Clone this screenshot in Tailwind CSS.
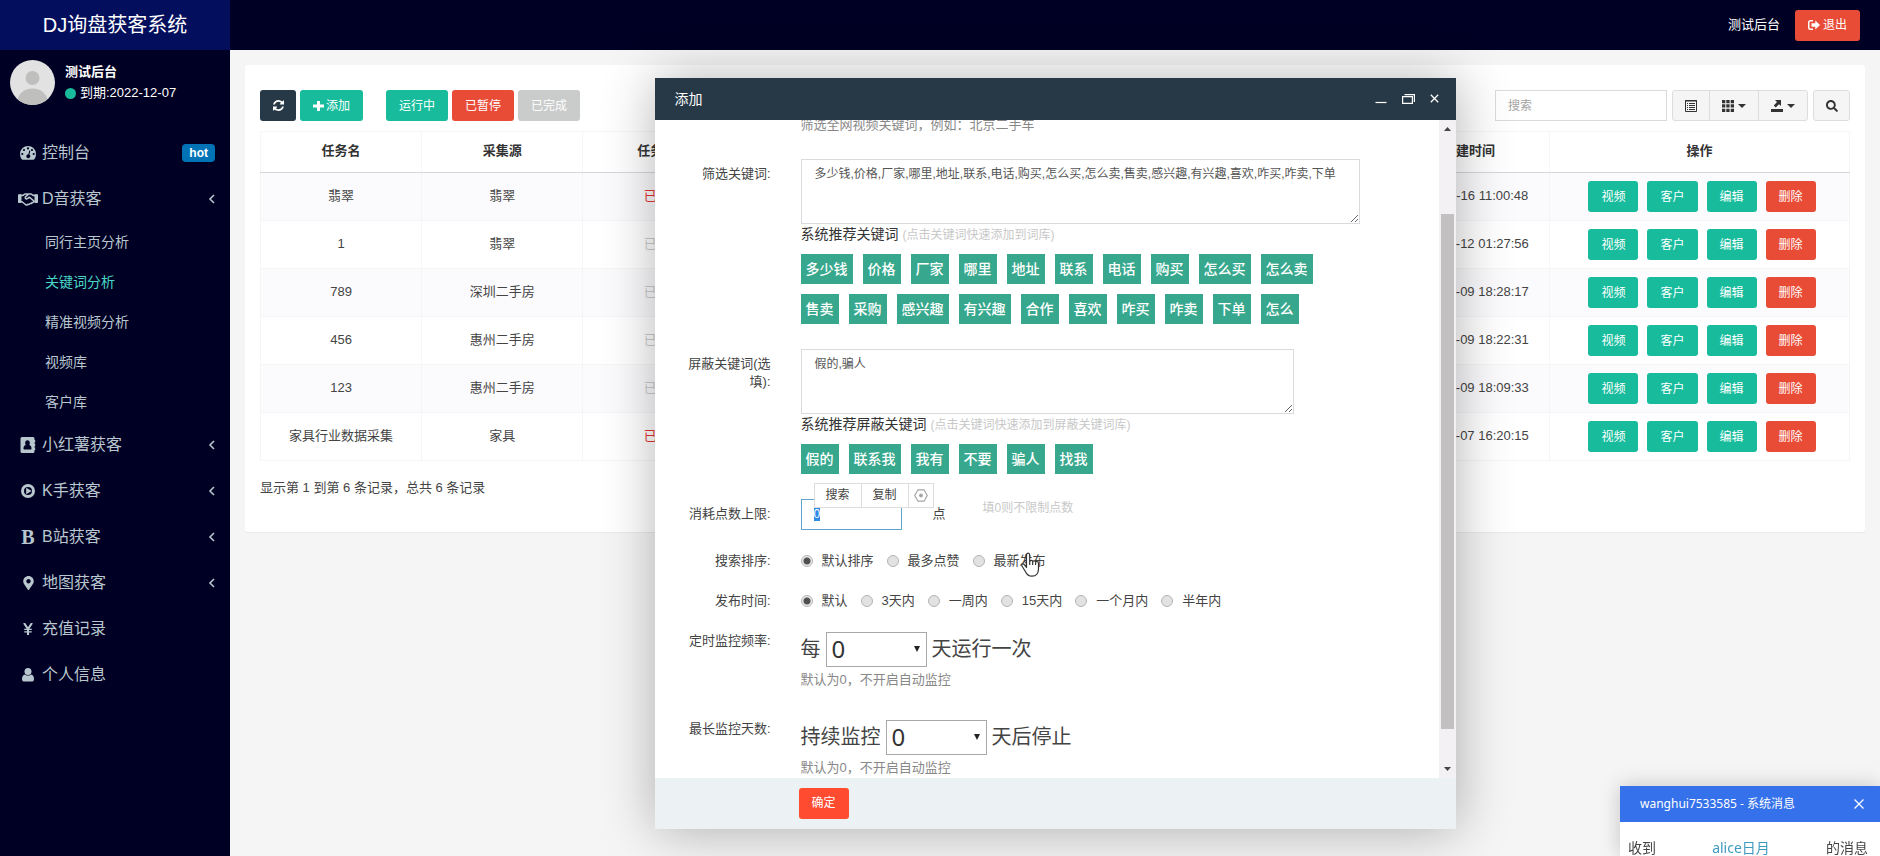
<!DOCTYPE html>
<html lang="zh-CN">
<head>
<meta charset="utf-8">
<title>DJ询盘获客系统</title>
<script src="https://cdn.jsdelivr.net/npm/@tailwindcss/browser@4"></script>
</head>
<body class="flex h-screen overflow-hidden bg-[#f5f5f6] font-['Liberation_Sans','Noto_Sans_CJK_SC',sans-serif] text-[13px] leading-[18px] text-[#444]">

<!-- Sidebar -->
<aside class="flex w-[230px] shrink-0 flex-col bg-[#000024] text-[#b8c7ce]">
  <a href="#" class="flex h-[50px] items-center justify-center bg-[#030f5c] text-[20px] leading-[30px] text-white">DJ询盘获客系统</a>
  <div class="flex h-20 gap-[10px] px-[10px] pt-[10px]">
    <svg class="size-[45px] shrink-0 rounded-full bg-[#e2e2e3]" viewBox="0 0 45 45"><circle cx="22.500" cy="18" r="7" fill="#bfc0be"/><ellipse cx="22.500" cy="41" rx="15" ry="12.500" fill="#bfc0be"/></svg>
    <div class="flex flex-col gap-[3px] pt-[3px] text-white">
      <p class="font-bold">测试后台</p>
      <p class="flex items-center gap-1"><span class="size-[11px] rounded-full bg-[#18bc9c]"></span>到期:2022-12-07</p>
    </div>
  </div>
  <nav class="text-[16px] leading-6">
    <a href="#" class="flex h-[46px] items-center pr-[15px] pl-[18px]">
      <span class="mr-1 flex w-5 justify-center"><svg class="h-4 w-4" viewBox="0 0 16 14" fill="currentColor"><path fill-rule="evenodd" d="M8 0a8 8 0 0 1 8 8c0 2-.6 3.600-1.500 5-.3.600-.7.800-1.200.8H2.700c-.5 0-.9-.2-1.200-.8A9 9 0 0 1 0 8a8 8 0 0 1 8-8zM8 1.300a1.100 1.100 0 1 0 0 2.200 1.100 1.100 0 0 0 0-2.200zM4 2.900a1.100 1.100 0 1 0 0 2.200 1.100 1.100 0 0 0 0-2.200zM2.300 6.900a1.100 1.100 0 1 0 0 2.200 1.100 1.100 0 0 0 0-2.200zM13.700 6.900a1.100 1.100 0 1 0 0 2.200 1.100 1.100 0 0 0 0-2.200zM12 2.900a1.100 1.100 0 1 0 0 2.200 1.100 1.100 0 0 0 0-2.200zM9.300 4.500 8.400 8.300a2 2 0 1 0 1 .3l1-3.800z"/></svg></span>
      控制台<span class="ml-auto rounded bg-[#0073b7] px-[7px] text-[12px] font-bold leading-[18px] text-white">hot</span>
    </a>
    <a href="#" class="flex h-[46px] items-center pr-[15px] pl-[18px]">
      <span class="mr-1 flex w-5 justify-center"><svg class="h-4 w-5" viewBox="0 0 22 15" fill="none" stroke="currentColor" stroke-width="1.700" stroke-linejoin="round" stroke-linecap="round"><path d="M.8 3H3v8H.8zM19 3h2.200v8H19z" fill="currentColor"/><path d="M3 3.500h2.500L7.500 2h3.200M19 3.500h-2.500L14.500 2h-2.800L8 5.500c-.5 1.800 1.500 2.500 3 1.200l1.500-1.200 5 4.200M3 10.500h1.500l4 3.300c1 .6 2 .2 2.300-.6 1 .6 2 .2 2.400-.8 1 .4 1.900 0 2.100-1 1 .2 1.800-.2 2.200-1.200H19"/></svg></span>
      D音获客<svg class="ml-auto h-3 w-[7px]" viewBox="0 0 7 12" fill="none" stroke="currentColor" stroke-width="1.600"><path d="M6 2 2 6l4 4"/></svg>
    </a>
    <div class="flex flex-col text-[14px] leading-10">
      <a href="#" class="pl-[45px]">同行主页分析</a>
      <a href="#" class="pl-[45px] text-[#48d8c4]">关键词分析</a>
      <a href="#" class="pl-[45px]">精准视频分析</a>
      <a href="#" class="pl-[45px]">视频库</a>
      <a href="#" class="pl-[45px]">客户库</a>
    </div>
    <a href="#" class="flex h-[46px] items-center pr-[15px] pl-[18px]">
      <span class="mr-1 flex w-5 justify-center"><svg class="h-4 w-4" viewBox="0 0 16 16" fill="currentColor"><path fill-rule="evenodd" d="M2 0h11a1.500 1.500 0 0 1 1.500 1.500V3h.7v2.500h-.7v1.200h.7v2.500h-.7v1.200h.7V13h-.7v1.500A1.500 1.500 0 0 1 13 16H2a1.500 1.500 0 0 1-1.500-1.500v-13A1.500 1.500 0 0 1 2 0zm5.500 3.300C6 3.300 5.200 4.300 5.200 6c0 .8.200 1.500.5 2-1.500.3-2.200 1.600-2.200 3.500 0 .6.300 1 1 1h6c.7 0 1-.4 1-1 0-1.900-.7-3.200-2.200-3.500.3-.5.500-1.200.5-2 0-1.700-.8-2.700-2.300-2.700z"/></svg></span>
      小红薯获客<svg class="ml-auto h-3 w-[7px]" viewBox="0 0 7 12" fill="none" stroke="currentColor" stroke-width="1.600"><path d="M6 2 2 6l4 4"/></svg>
    </a>
    <a href="#" class="flex h-[46px] items-center pr-[15px] pl-[18px]">
      <span class="mr-1 flex w-5 justify-center"><svg class="size-[14px]" viewBox="0 0 14 14" fill="currentColor"><path fill-rule="evenodd" d="M7 0a7 7 0 1 1 0 14A7 7 0 0 1 7 0zm0 3a4 4 0 1 0 0 8 4 4 0 0 0 0-8z"/><path d="M5.200 3.800v6.400L10.600 7z"/></svg></span>
      K手获客<svg class="ml-auto h-3 w-[7px]" viewBox="0 0 7 12" fill="none" stroke="currentColor" stroke-width="1.600"><path d="M6 2 2 6l4 4"/></svg>
    </a>
    <a href="#" class="flex h-[46px] items-center pr-[15px] pl-[18px]">
      <span class="mr-1 flex w-5 justify-center font-['Liberation_Serif',serif] text-[20px] font-bold">B</span>
      B站获客<svg class="ml-auto h-3 w-[7px]" viewBox="0 0 7 12" fill="none" stroke="currentColor" stroke-width="1.600"><path d="M6 2 2 6l4 4"/></svg>
    </a>
    <a href="#" class="flex h-[46px] items-center pr-[15px] pl-[18px]">
      <span class="mr-1 flex w-5 justify-center"><svg class="h-[14px] w-[11px]" viewBox="0 0 384 512" fill="currentColor"><path d="M172.268 501.670C26.970 291.031 0 269.413 0 192 0 85.961 85.961 0 192 0s192 85.961 192 192c0 77.413-26.970 99.031-172.268 309.670-9.535 13.774-29.930 13.773-39.464 0zM192 272c44.183 0 80-35.817 80-80s-35.817-80-80-80-80 35.817-80 80 35.817 80 80 80z"/></svg></span>
      地图获客<svg class="ml-auto h-3 w-[7px]" viewBox="0 0 7 12" fill="none" stroke="currentColor" stroke-width="1.600"><path d="M6 2 2 6l4 4"/></svg>
    </a>
    <a href="#" class="flex h-[46px] items-center pr-[15px] pl-[18px]">
      <span class="mr-1 flex w-5 justify-center"><svg class="h-3 w-[10px]" viewBox="0 0 10 12" fill="none" stroke="currentColor" stroke-width="2.100"><path d="m1 0 4 6 4-6M5 6v6"/><path d="M1.200 6.300h7.600M1.200 8.900h7.600" stroke-width="1.200"/></svg></span>
      充值记录
    </a>
    <a href="#" class="flex h-[46px] items-center pr-[15px] pl-[18px]">
      <span class="mr-1 flex w-5 justify-center"><svg class="h-[14px] w-3" viewBox="0 0 12 14" fill="currentColor"><path d="M3 6.400C1 6.600 0 8.500 0 11c0 1.600.9 2.600 2.400 2.600h7.200c1.500 0 2.400-1 2.400-2.600 0-2.500-1-4.400-3-4.600A4.500 4.500 0 0 1 6 7.600a4.500 4.500 0 0 1-3-1.200z"/><circle cx="6" cy="3.500" r="3.500"/></svg></span>
      个人信息
    </a>
  </nav>
</aside>

<div class="flex min-w-0 flex-1 flex-col">
  <header class="flex h-[50px] shrink-0 items-center justify-end gap-[15px] bg-[#000024] pr-5 text-white">
    <span>测试后台</span>
    <button class="flex h-[31px] items-center gap-[3px] rounded-[3px] bg-[#e84c37] px-[13px] text-[12px]"><svg class="h-[10px] w-3" viewBox="0 0 12 10" fill="currentColor"><path d="M5 0v1.500H2.500c-.6 0-1 .4-1 1v5c0 .6.400 1 1 1H5V10H2.500A2.500 2.500 0 0 1 0 7.500v-5A2.500 2.500 0 0 1 2.500 0z"/><path d="M7.300.6 12 5 7.300 9.400V6.800H3.500V3.200h3.800z"/></svg>退出</button>
  </header>

  <div class="relative min-h-0 flex-1">
    <main class="p-[15px]">
      <section class="rounded-[3px] bg-white px-[15px] pt-[25px] pb-[35px] shadow-[0_1px_1px_rgba(0,0,0,0.05)]">
        <div class="mb-[10px] flex items-center text-[12px] text-white">
          <button aria-label="刷新" class="mr-1 flex h-[31px] w-9 items-center justify-center rounded-[3px] bg-[#273947]"><svg class="size-[11px]" viewBox="0 0 1536 1536" fill="currentColor"><path d="M1511 928q0 5-1 7-64 268-268 434.500T764 1536q-146 0-282.500-55T238 1324l-129 129q-19 19-45 19t-45-19-19-45V960q0-26 19-45t45-19h448q26 0 45 19t19 45-19 45l-137 137q71 66 161 102t187 36q134 0 250-65t186-179q11-17 53-117 8-23 30-23h192q13 0 22.500 9.500t9.500 22.500zm25-800v448q0 26-19 45t-45 19h-448q-26 0-45-19t-19-45 19-45l138-138Q969 256 768 256q-134 0-250 65T332 500q-11 17-53 117-8 23-30 23H50q-13 0-22.500-9.500T18 608v-7q65-268 270-434.500T768 0q146 0 284 55.500T1297 212l130-129q19-19 45-19t45 19 19 45z"/></svg></button>
          <button class="mr-[23px] flex h-[31px] items-center gap-[2px] rounded-[3px] bg-[#18bc9c] px-[13px]"><svg class="h-3 w-[11px]" viewBox="0 0 11 12" fill="currentColor"><path d="M4 1h3v3.500h4v3H7V11H4V7.500H0v-3h4z"/></svg>添加</button>
          <button class="mr-1 h-[31px] rounded-[3px] bg-[#18bc9c] px-[13px]">运行中</button>
          <button class="mr-1 h-[31px] rounded-[3px] bg-[#e84c37] px-[13px]">已暂停</button>
          <button class="h-[31px] rounded-[3px] bg-[#cacccb] px-[13px]">已完成</button>
          <input type="text" aria-label="搜索" placeholder="搜索" class="ml-auto h-[31px] w-[172px] border border-[#d9dbde] bg-white px-3 text-[#444] placeholder:text-[#a3a3a3]">
          <div class="ml-[5px] flex h-[31px] divide-x divide-[#dddddd] rounded-[3px] border border-[#dddddd] bg-[#f5f5f5] text-[#333]">
            <button aria-label="切换视图" class="flex w-[37px] items-center justify-center"><svg class="h-3 w-3" viewBox="0 0 12 12" fill="none" stroke="currentColor"><path d="M.5.500h11v11H.5zM0 1h12"/><path d="M2 3.500h1M4 3.500h6M2 5.500h1M4 5.500h6M2 7.500h1M4 7.500h6M2 9.500h1M4 9.500h6"/></svg></button>
            <button aria-label="列" class="flex w-[49px] items-center justify-center gap-1"><svg class="h-3 w-3" viewBox="0 0 12 12" fill="currentColor"><path d="M0 0h3.300v3.300H0zM4.300 0h3.300v3.300H4.300zM8.700 0H12v3.300H8.700zM0 4.300h3.300v3.300H0zM4.300 4.300h3.300v3.300H4.300zM8.700 4.300H12v3.300H8.700zM0 8.700h3.300V12H0zM4.300 8.700h3.300V12H4.300zM8.700 8.700H12V12H8.700z"/></svg><svg class="h-1 w-2" viewBox="0 0 8 4" fill="currentColor"><path d="M0 0h8L4 4z"/></svg></button>
            <button aria-label="导出" class="flex w-[48px] items-center justify-center gap-1"><svg class="h-3 w-3" viewBox="0 0 12 12" fill="currentColor"><path d="M0 9h12v3H0zM4 0h6v6L8 4.200 4.700 7.500 2.800 5.600 6 2z"/></svg><svg class="h-1 w-2" viewBox="0 0 8 4" fill="currentColor"><path d="M0 0h8L4 4z"/></svg></button>
          </div>
          <button aria-label="查询" class="ml-[5px] flex h-[31px] w-[37px] items-center justify-center rounded-[3px] border border-[#dddddd] bg-[#f5f5f5] text-[#333]"><svg class="h-3 w-3" viewBox="0 0 512 512" fill="currentColor"><path d="M505 442.700L405.300 343c-4.500-4.500-10.600-7-17-7H372c27.600-35.300 44-79.700 44-128C416 93.100 322.900 0 208 0S0 93.100 0 208s93.100 208 208 208c48.300 0 92.700-16.400 128-44v16.300c0 6.400 2.500 12.500 7 17l99.700 99.700c9.400 9.400 24.600 9.400 33.900 0l28.300-28.300c9.400-9.400 9.400-24.600.1-34zM208 336c-70.700 0-128-57.200-128-128 0-70.700 57.200-128 128-128 70.700 0 128 57.200 128 128 0 70.700-57.200 128-128 128z"/></svg></button>
        </div>

        <table class="w-full table-fixed border-collapse text-center">
          <thead>
            <tr class="h-[41px] text-[#333] [&>th]:border [&>th]:border-[#f6f6f7] [&>th]:border-b-[#d5d8da] [&>th]:pb-[2px] [&>th]:font-bold">
              <th>任务名</th><th>采集源</th><th>任务状态</th><th></th><th></th><th></th><th></th><th>创建时间</th><th class="w-[300px]">操作</th>
            </tr>
          </thead>
          <tbody id="tasks"></tbody>
        </table>
        <p class="mt-[18px]">显示第 1 到第 6 条记录，总共 6 条记录</p>
      </section>
    </main>

    <!-- Add-task dialog, centred over the content area -->
    <div class="absolute inset-0 flex items-center justify-center">
      <section role="dialog" aria-label="添加" class="flex w-[801px] flex-col bg-white shadow-[1px_1px_50px_rgba(0,0,0,0.3)]">
        <header class="flex h-[42px] items-center bg-[#273947] pr-[17px] pl-5 text-[14px] text-white">
          <h2 class="mr-auto">添加</h2>
          <button aria-label="最小化" class="mr-[15px]"><svg class="h-[14px] w-3" viewBox="0 0 12 14" fill="none" stroke="currentColor" stroke-width="1.200"><path d="M.5 10.500h11"/></svg></button>
          <button aria-label="最大化" class="mr-[15px]"><svg class="h-[10px] w-[13px]" viewBox="0 0 13 10" fill="none" stroke="currentColor" stroke-width="1.200"><path d="M.6 2.600h9.800v6.800H.6zM2.500.6h9.900v7.400"/></svg></button>
          <button aria-label="关闭"><svg class="h-[9px] w-[9px]" viewBox="0 0 9 9" fill="none" stroke="currentColor" stroke-width="1.300"><path d="m.8.800 7.400 7.400M8.200.8.800 8.200"/></svg></button>
        </header>

        <div class="flex h-[658px]">
          <form id="task-form" class="min-w-0 flex-1 overflow-hidden pl-[31px]">
            <p class="-mt-1 mb-[25px] pl-[115px] text-[#888]">筛选全网视频关键词，例如：北京二手车</p>

            <div class="mb-[25px] flex gap-[30px]">
              <label for="keywords" class="w-[85px] shrink-0 pt-[6px] text-right">筛选关键词:</label>
              <div>
                <textarea id="keywords" class="block h-[65px] w-[559px] resize border border-[#d9dbde] px-[13px] py-[6px] text-[12px] leading-[17px] text-[#555]">多少钱,价格,厂家,哪里,地址,联系,电话,购买,怎么买,怎么卖,售卖,感兴趣,有兴趣,喜欢,咋买,咋卖,下单</textarea>
                <p class="mt-[1px] mb-[9px] text-[14px] leading-[19px] text-[#333]">系统推荐关键词 <span class="text-[12px] text-[#c8c8c8]">(点击关键词快速添加到词库)</span></p>
                <div class="flex flex-wrap gap-[10px] text-[14px] font-medium text-white [&>button]:h-[30px] [&>button]:bg-[#37a88d] [&>button]:px-[5px]">
                  <button type="button">多少钱</button><button type="button">价格</button><button type="button">厂家</button><button type="button">哪里</button><button type="button">地址</button><button type="button">联系</button><button type="button">电话</button><button type="button">购买</button><button type="button">怎么买</button><button type="button">怎么卖</button>
                </div>
                <div class="mt-[10px] flex flex-wrap gap-[10px] text-[14px] font-medium text-white [&>button]:h-[30px] [&>button]:bg-[#37a88d] [&>button]:px-[5px]">
                  <button type="button">售卖</button><button type="button">采购</button><button type="button">感兴趣</button><button type="button">有兴趣</button><button type="button">合作</button><button type="button">喜欢</button><button type="button">咋买</button><button type="button">咋卖</button><button type="button">下单</button><button type="button">怎么</button>
                </div>
              </div>
            </div>

            <div class="mb-[25px] flex gap-[30px]">
              <label for="blocked" class="w-[85px] shrink-0 pt-[6px] text-right">屏蔽关键词(选填):</label>
              <div>
                <textarea id="blocked" class="block h-[65px] w-[493px] resize border border-[#d9dbde] px-[13px] py-[6px] text-[12px] leading-[17px] text-[#555]">假的,骗人</textarea>
                <p class="mt-[1px] mb-[9px] text-[14px] leading-[19px] text-[#333]">系统推荐屏蔽关键词 <span class="text-[12px] text-[#c8c8c8]">(点击关键词快速添加到屏蔽关键词库)</span></p>
                <div class="flex gap-[10px] text-[14px] font-medium text-white [&>button]:h-[30px] [&>button]:bg-[#37a88d] [&>button]:px-[5px]">
                  <button type="button">假的</button><button type="button">联系我</button><button type="button">我有</button><button type="button">不要</button><button type="button">骗人</button><button type="button">找我</button>
                </div>
              </div>
            </div>

            <div class="mb-[22px] flex gap-[30px]">
              <label for="limit" class="w-[85px] shrink-0 pt-[6px] text-right">消耗点数上限:</label>
              <div class="relative flex">
                <input id="limit" type="text" value="0" class="h-[31px] w-[101px] border border-[#5fa5cd] px-3 text-[12px] text-[#555] outline-none selection:bg-[#2f8be6] selection:text-white">
                <span class="pt-[6px] pl-[31px]">点</span>
                <span class="pl-[37px] text-[12px] text-[#c8c8c8]">填0则不限制点数</span>
                <div class="absolute -top-4 left-[13px] flex h-[25px] divide-x divide-[#dddddd] border border-[#dddddd] bg-white text-[12px]">
                  <button type="button" class="w-[47px]">搜索</button>
                  <button type="button" class="w-[47px]">复制</button>
                  <button type="button" aria-label="设置" class="flex w-6 items-center justify-center text-[#a5a5a5]"><svg class="h-[13px] w-[14px]" viewBox="0 0 14 13" fill="none" stroke="currentColor" stroke-width="1.200"><path d="M4 .8h6l3.300 5.700L10 12.200H4L.7 6.500z"/><circle cx="7" cy="6.500" r="1.300" fill="currentColor"/></svg></button>
                </div>
              </div>
            </div>

            <fieldset class="relative mb-[22px] flex items-center gap-[30px]">
              <legend class="float-left w-[85px] text-right">搜索排序:</legend>
              <div class="flex gap-[13px] [&_input]:size-3 [&_input]:appearance-none [&_input]:rounded-full [&_input]:border [&_input]:border-[#b5b5b5] [&_input]:bg-[#e2e2e2] [&_input:checked]:bg-[radial-gradient(circle,#505050_0_3px,#e8e8e8_4px)] [&>label]:flex [&>label]:items-center [&>label]:gap-[9px]">
                <label><input type="radio" name="sort" checked>默认排序</label>
                <label><input type="radio" name="sort">最多点赞</label>
                <label><input type="radio" name="sort">最新发布</label>
              </div>
              <svg class="pointer-events-none absolute top-0 left-[334px] h-[26px] w-5" viewBox="0 0 20 26" fill="#ffffff" stroke="#333333" stroke-width="1.200" stroke-linejoin="round"><path d="M6.500 15.500V3c0-2.600 3.200-2.600 3.200 0v6.500c.3-1.600 2.900-1.500 3 .2.500-1.400 2.900-1.200 2.900.5.600-1.200 2.900-.8 2.900 1v5.500c0 4.500-2.200 7.500-6.500 7.500-3.500 0-5.200-1.700-6.500-4.500L2 14c-1-2.200 1.200-3 2.500-1.200z"/><path d="M9.700 9v4M12.700 9.700V13M15.600 10.500V13" fill="none"/></svg>
            </fieldset>

            <fieldset class="mb-[22px] flex items-center gap-[30px]">
              <legend class="float-left w-[85px] text-right">发布时间:</legend>
              <div class="flex gap-[13px] [&_input]:size-3 [&_input]:appearance-none [&_input]:rounded-full [&_input]:border [&_input]:border-[#b5b5b5] [&_input]:bg-[#e2e2e2] [&_input:checked]:bg-[radial-gradient(circle,#505050_0_3px,#e8e8e8_4px)] [&>label]:flex [&>label]:items-center [&>label]:gap-[9px]">
                <label><input type="radio" name="time" checked>默认</label>
                <label><input type="radio" name="time">3天内</label>
                <label><input type="radio" name="time">一周内</label>
                <label><input type="radio" name="time">15天内</label>
                <label><input type="radio" name="time">一个月内</label>
                <label><input type="radio" name="time">半年内</label>
              </div>
            </fieldset>

            <div class="mb-[31px] flex gap-[30px]">
              <label for="rate" class="w-[85px] shrink-0 text-right">定时监控频率:</label>
              <div>
                <div class="flex items-center gap-[5px] text-[20px] leading-[30px]">每
                  <span class="grid items-center">
                    <select id="rate" class="col-start-1 row-start-1 h-[35px] w-[101px] appearance-none border border-[#a9a9a9] bg-white pl-[5px] font-['Noto_Sans',sans-serif] text-[24px] leading-[30px] text-[#333]"><option>0</option></select>
                    <svg class="pointer-events-none col-start-1 row-start-1 mr-[7px] h-[6px] w-[6px] justify-self-end" viewBox="0 0 6 6" fill="#222222"><path d="M0 0h6L3 6z"/></svg>
                  </span>天运行一次</div>
                <p class="mt-1 text-[#888]">默认为0，不开启自动监控</p>
              </div>
            </div>

            <div class="flex gap-[30px]">
              <label for="days" class="w-[85px] shrink-0 text-right">最长监控天数:</label>
              <div>
                <div class="flex items-center gap-[5px] text-[20px] leading-[30px]">持续监控
                  <span class="grid items-center">
                    <select id="days" class="col-start-1 row-start-1 h-[35px] w-[101px] appearance-none border border-[#a9a9a9] bg-white pl-[5px] font-['Noto_Sans',sans-serif] text-[24px] leading-[30px] text-[#333]"><option>0</option></select>
                    <svg class="pointer-events-none col-start-1 row-start-1 mr-[7px] h-[6px] w-[6px] justify-self-end" viewBox="0 0 6 6" fill="#222222"><path d="M0 0h6L3 6z"/></svg>
                  </span>天后停止</div>
                <p class="mt-1 text-[#888]">默认为0，不开启自动监控</p>
              </div>
            </div>
          </form>

          <!-- Scroll bar of the form -->
          <div class="flex w-[17px] flex-col items-center bg-[#f3f1f4] py-[7px]">
            <svg class="h-1 w-[7px]" viewBox="0 0 7 4" fill="#444444"><path d="M0 4h7L3.500 0z"/></svg>
            <div class="mt-[83px] h-[515px] w-[13px] bg-[#c2c0c1]"></div>
            <svg class="mt-auto h-1 w-[7px]" viewBox="0 0 7 4" fill="#444444"><path d="M0 0h7L3.500 4z"/></svg>
          </div>
        </div>

        <footer class="flex h-[51px] items-center bg-[#ecf2f4] pl-36">
          <button type="submit" form="task-form" class="h-[31px] rounded-[3px] bg-[#ff4b30] px-[13px] text-[12px] text-white">确定</button>
        </footer>
      </section>
    </div>
  </div>
</div>

<!-- Incoming message toast -->
<section class="fixed right-0 bottom-0 w-[260px] bg-white shadow-[0_0_20px_rgba(0,0,0,0.2)]">
  <header class="flex h-9 items-center justify-between bg-[#3571ea] pr-4 pl-5 font-['Noto_Sans','Noto_Sans_CJK_SC',sans-serif] text-[12px] text-white">
    <h2>wanghui7533585 - 系统消息</h2>
    <button aria-label="关闭消息"><svg class="h-[10px] w-[10px]" viewBox="0 0 10 10" fill="none" stroke="currentColor" stroke-width="1.200"><path d="m.5.500 9 9M9.500.5l-9 9"/></svg></button>
  </header>
  <p class="flex h-[34px] items-end justify-between pr-3 pl-2 font-['Noto_Sans','Noto_Sans_CJK_SC',sans-serif] text-[14px] leading-4"><span>收到</span><a href="#" class="text-[#3f9abf]">alice日月</a><span>的消息</span></p>
</section>

<script>
  const tasks = [
    ['翡翠', '翡翠', '已暂停', '2022-11-16 11:00:48'],
    ['1', '翡翠', '已完成', '2022-11-12 01:27:56'],
    ['789', '深圳二手房', '已完成', '2022-11-09 18:28:17'],
    ['456', '惠州二手房', '已完成', '2022-11-09 18:22:31'],
    ['123', '惠州二手房', '已完成', '2022-11-09 18:09:33'],
    ['家具行业数据采集', '家具', '已暂停', '2022-11-07 16:20:15'],
  ];
  document.getElementById('tasks').innerHTML = tasks.map(([name, source, status, created]) => `
    <tr class="h-12 odd:bg-[#fbfafc] [&>td]:border [&>td]:border-[#f5f5f6] [&>td]:pb-[2px] [&>td:last-child]:pb-0">
      <td>${name}</td><td>${source}</td>
      <td class="${status === '已暂停' ? 'text-[#e8322c]' : 'text-[#cccccc]'}">${status}</td>
      <td></td><td></td><td></td><td></td><td>${created}</td>
      <td><div class="flex justify-center gap-[9px] pl-[5px] text-[12px] text-white">
        <button class="h-[31px] rounded-[3px] bg-[#18bc9c] px-[13px]">视频</button>
        <button class="h-[31px] rounded-[3px] bg-[#18bc9c] px-[13px]">客户</button>
        <button class="h-[31px] rounded-[3px] bg-[#18bc9c] px-[13px]">编辑</button>
        <button class="h-[31px] rounded-[3px] bg-[#e84c37] px-[13px]">删除</button>
      </div></td>
    </tr>`).join('');
  const limit = document.getElementById('limit');
  limit.focus({ preventScroll: true });
  limit.select();
</script>
</body>
</html>
